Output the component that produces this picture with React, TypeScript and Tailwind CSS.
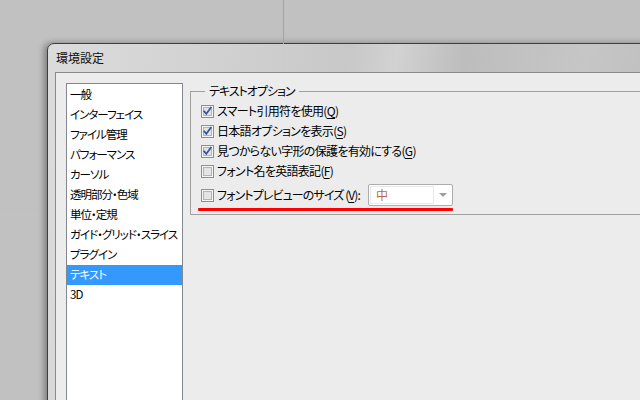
import React from 'react';

const JP = "font-['Noto_Sans_CJK_JP','Noto_Sans',sans-serif] [font-feature-settings:'palt']";

const categories = [
  '一般',
  'インターフェイス',
  'ファイル管理',
  'パフォーマンス',
  'カーソル',
  '透明部分・色域',
  '単位・定規',
  'ガイド・グリッド・スライス',
  'プラグイン',
  'テキスト',
  '3D',
];

type CheckProps = { checked: boolean };
const CheckBox = ({ checked }: CheckProps) => (
  <svg width="13" height="13" viewBox="0 0 13 13" className="shrink-0">
    <rect x="0.5" y="0.5" width="12" height="12" fill="#f4f4f4" stroke="#8e8f8f" />
    <rect x="2.5" y="2.5" width="8" height="8" fill="#e4e4e4" stroke="#b4b4b4" />
    {checked && (
      <path
        d="M3.2 6.4 L5.3 8.8 L9.8 2.8"
        fill="none"
        stroke="#3a57a0"
        strokeWidth="1.8"
        strokeLinecap="square"
      />
    )}
  </svg>
);

type OptionProps = { checked: boolean; label: string; hotkey: string };
const Option = ({ checked, label, hotkey }: OptionProps) => (
  <div className="flex items-center h-[20px] gap-[3px]">
    <CheckBox checked={checked} />
    <span className="leading-none whitespace-nowrap tracking-[-0.7px]">
      {label}(<span className="underline underline-offset-2">{hotkey}</span>)
    </span>
  </div>
);

export default function App() {
  return (
    <div className={`relative w-[640px] h-[400px] overflow-hidden bg-[#c1c1c1] text-[12px] text-black ${JP}`}>
      {/* guide line, left */}
      <div className="absolute left-0 top-[209px] w-[47px] h-px bg-[#7fd8dc] opacity-70" />

      {/* dialog window */}
      <div className="absolute left-[47px] top-[43px] w-[610px] h-[380px] flex flex-col border border-[#3e3e3e] rounded-tl-[7px] shadow-[-3px_0_6px_rgba(0,0,0,0.35)] bg-[linear-gradient(100deg,#dcdcdc_0%,#cfcfcf_30%,#c8c8c8_45%,#d2d2d2_52%,#bdbdbd_62%,#c6c6c6_80%,#bababa_100%)]">
        <div className="h-[28px] flex items-center pl-[8px] text-[12px] text-[#101010]">環境設定</div>
        <div className="flex-1 flex pl-[7px]">
          <div className="flex-1 flex items-start gap-[7px] pl-[10px] pt-[10px] border-l border-t border-[#8a8a8a] bg-[#ececec]">
            <ul className="w-[117px] h-[330px] border border-[#828790] bg-white pt-px">
              {categories.map((item) => (
                <li
                  key={item}
                  className={`h-[20px] flex items-center pl-[3px] whitespace-nowrap text-[11.5px] tracking-[-1px] ${
                    item === 'テキスト' ? 'bg-[#3399ff] text-white' : ''
                  }`}
                >
                  {item}
                </li>
              ))}
            </ul>

            <fieldset className="w-[460px] border border-[#a0a0a0] pl-[7px] pt-[2px] pb-[3px]">
              <legend className="ml-[7px] px-[4px] h-[16px] leading-[16px] tracking-[-1px]">テキストオプション</legend>
              <div className="flex flex-col pl-[3px]">
                <Option checked label="スマート引用符を使用" hotkey="Q" />
                <Option checked label="日本語オプションを表示" hotkey="S" />
                <Option checked label="見つからない字形の保護を有効にする" hotkey="G" />
                <Option checked={false} label="フォント名を英語表記" hotkey="F" />
                <div className="flex items-center h-[22px] mt-[3px] gap-[3px]">
                  <CheckBox checked={false} />
                  <span className="leading-none whitespace-nowrap tracking-[-0.9px]">
                    フォントプレビューのサイズ (<span className="underline underline-offset-2">V</span>):
                  </span>
                  <div className="ml-[5px] w-[85px] h-[22px] flex items-center border border-[#acacac] rounded-[2px] bg-white pl-px">
                    <div className="w-[64px] h-[18px] flex items-center border border-[#e8e8e8] pl-[5px] text-[#b86a3c]">
                      中
                    </div>
                    <div className="flex-1 flex justify-center">
                      <svg width="8" height="5" viewBox="0 0 8 5">
                        <path d="M0 0 H8 L4 4 Z" fill="#a0a0a0" />
                      </svg>
                    </div>
                  </div>
                </div>
              </div>
              <div className="mt-[2px] w-[255px] h-[3px] bg-[#ff0000] rounded-[1px]" />
            </fieldset>
          </div>
        </div>
      </div>

      {/* guide line, vertical, over the desktop and faintly over the title bar */}
      <div className="absolute left-[283px] top-0 w-px h-[44px] bg-[#00e5f0]" />
      <div className="absolute left-[283px] top-[44px] w-px h-[28px] bg-[#7fe6ea] opacity-40" />
    </div>
  );
}
